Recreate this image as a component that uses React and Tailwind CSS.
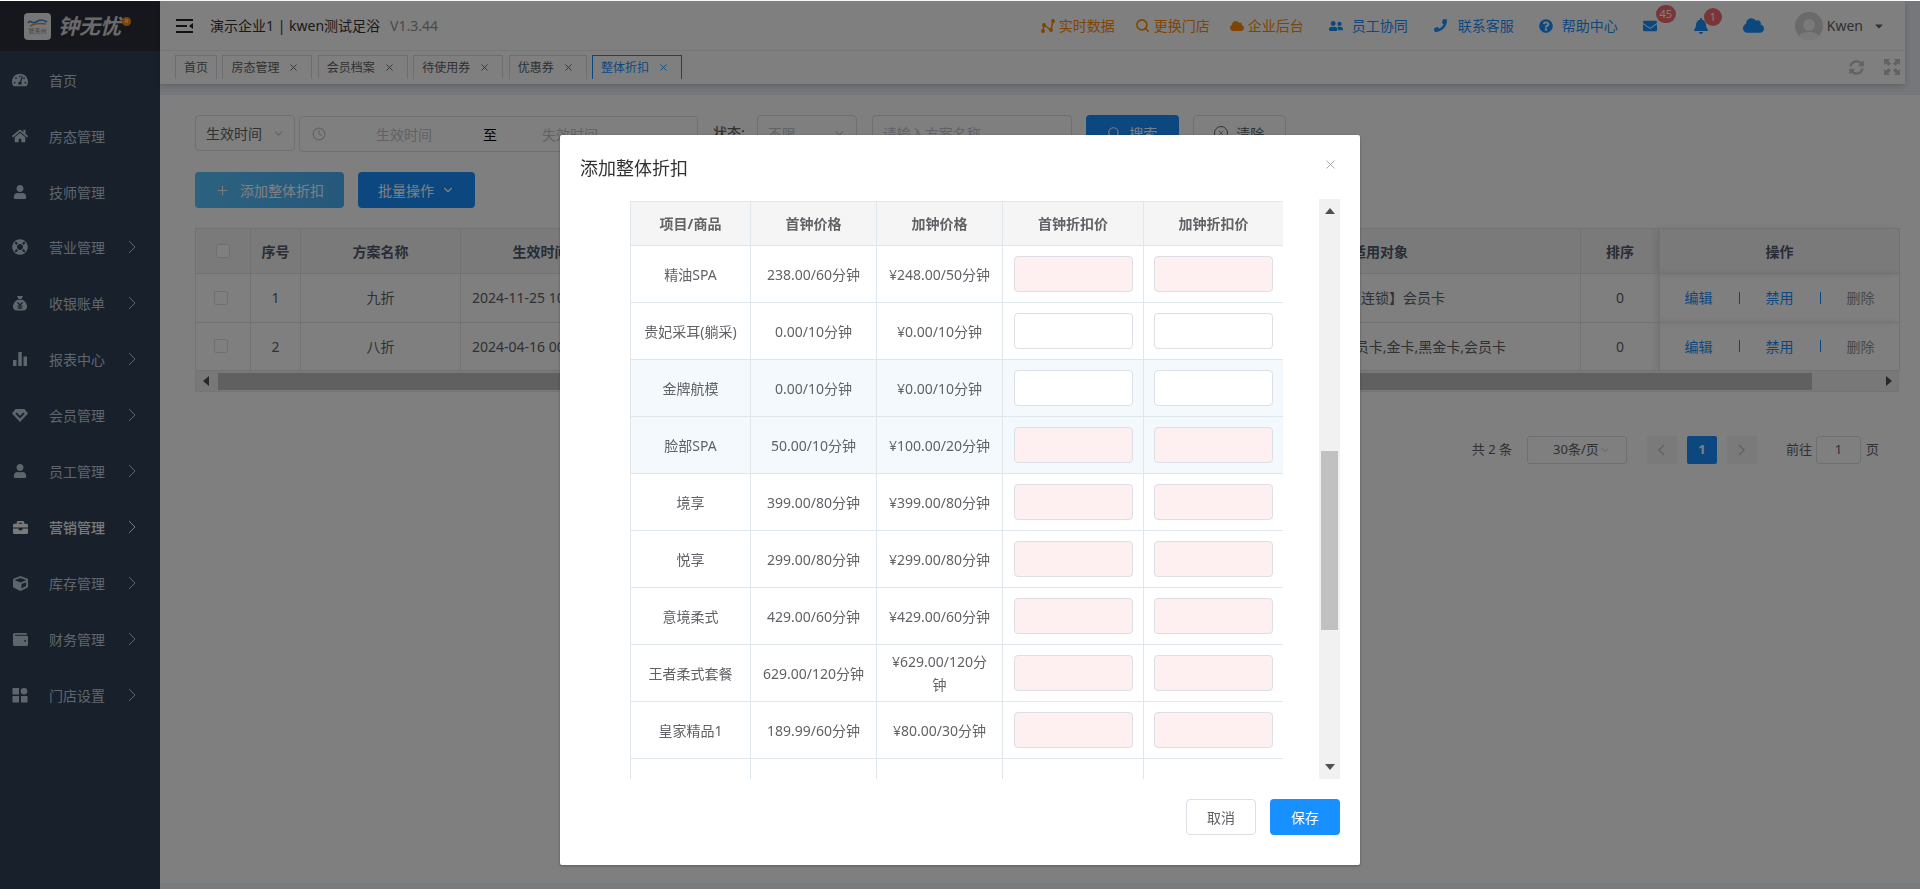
import { X, ChevronDown, Plus, Search, Clock } from "lucide-react";
import {
	FaTachometerAlt,
	FaHome,
	FaUser,
	FaLifeRing,
	FaBriefcase,
	FaCube,
	FaWallet,
	FaCloud,
	FaUserFriends,
	FaPhoneAlt,
	FaQuestionCircle,
	FaEnvelope,
	FaBell,
	FaCaretDown,
	FaSyncAlt,
} from "react-icons/fa";

const BagIcon = () => (
	<svg width="16" height="16" viewBox="0 0 16 16">
		<path fill="currentColor" d="M5 1h6l-1.5 3h-3zM5.6 4.8h4.8C13 6.4 15 8.600 15 11.500 15 14.200 13.500 15.500 11 15.500H5C2.500 15.500 1 14.200 1 11.500 1 8.600 3 6.400 5.600 4.800z" />
		<path fill="none" stroke="#304156" strokeWidth="1.200" d="M5.500 7.500 8 10l2.500-2.500M8 10v4M5.500 11h5M5.500 13h5" />
	</svg>
);

const BarsIcon = () => (
	<svg width="16" height="16" viewBox="0 0 16 16" fill="currentColor">
		<rect x="1" y="9" width="3.500" height="6" />
		<rect x="6.300" y="1" width="3.500" height="14" />
		<rect x="11.500" y="5.500" width="3.500" height="9.500" />
	</svg>
);

const GemIcon = () => (
	<svg width="16" height="16" viewBox="0 0 16 16">
		<path fill="currentColor" d="M3.500 2h9L16 6.500 8 15 0 6.500z" />
		<path fill="none" stroke="#304156" strokeWidth="1.800" d="M4 6.200l4 4 4-4" />
	</svg>
);

const GridIcon = () => (
	<svg width="16" height="16" viewBox="0 0 16 16" fill="currentColor">
		<rect x="0.500" y="1" width="6.500" height="6.500" />
		<circle cx="12" cy="4.200" r="3.300" />
		<rect x="0.500" y="9" width="6.500" height="6.500" />
		<rect x="9" y="9" width="6.500" height="6.500" />
	</svg>
);

const Chevron = () => (
	<svg width="8" height="14" viewBox="0 0 8 14" fill="none" stroke="currentColor" strokeWidth="1">
		<path d="M1 1l6 6-6 6" />
	</svg>
);

const menu = [
	{ name: "首页", icon: <FaTachometerAlt size={16} /> },
	{ name: "房态管理", icon: <FaHome size={16} /> },
	{ name: "技师管理", icon: <FaUser size={14} /> },
	{ name: "营业管理", icon: <FaLifeRing size={16} />, sub: true },
	{ name: "收银账单", icon: <BagIcon />, sub: true },
	{ name: "报表中心", icon: <BarsIcon />, sub: true },
	{ name: "会员管理", icon: <GemIcon />, sub: true },
	{ name: "员工管理", icon: <FaUser size={14} />, sub: true },
	{ name: "营销管理", icon: <FaBriefcase size={15} />, sub: true, active: true },
	{ name: "库存管理", icon: <FaCube size={15} />, sub: true },
	{ name: "财务管理", icon: <FaWallet size={15} />, sub: true },
	{ name: "门店设置", icon: <GridIcon />, sub: true },
];

const tabs = [
	{ name: "首页", fixed: true },
	{ name: "房态管理" },
	{ name: "会员档案" },
	{ name: "待使用券" },
	{ name: "优惠券" },
	{ name: "整体折扣", active: true },
];

const rows = [
	{ name: "精油SPA", first: "238.00/60分钟", extra: "¥248.00/50分钟", pink: true },
	{ name: "贵妃采耳(躺采)", first: "0.00/10分钟", extra: "¥0.00/10分钟" },
	{ name: "金牌航模", first: "0.00/10分钟", extra: "¥0.00/10分钟", hl: true },
	{ name: "脸部SPA", first: "50.00/10分钟", extra: "¥100.00/20分钟", pink: true, hl: true },
	{ name: "境享", first: "399.00/80分钟", extra: "¥399.00/80分钟", pink: true },
	{ name: "悦享", first: "299.00/80分钟", extra: "¥299.00/80分钟", pink: true },
	{ name: "意境柔式", first: "429.00/60分钟", extra: "¥429.00/60分钟", pink: true },
	{ name: "王者柔式套餐", first: "629.00/120分钟", extra: "¥629.00/120分钟", pink: true },
	{ name: "皇家精品1", first: "189.99/60分钟", extra: "¥80.00/30分钟", pink: true },
];

function Sidebar() {
	return (
		<aside className="flex w-[160px] shrink-0 flex-col bg-[#304156] text-[14px] text-[#bfcbd9]">
			<div className="flex h-[50px] items-center bg-[#2c2f3a] pl-[24px]">
				<div className="flex h-[27px] w-[27px] flex-col items-center justify-center rounded-[4px] bg-[#ececec]">
					<svg width="21" height="9" viewBox="0 0 21 9" fill="none">
						<path d="M1 5c3-5 3 2 8-1s7-2 11 0" stroke="#2f7fd0" strokeWidth="1.500" />
						<path d="M3 8c5-3 10-3 16-2" stroke="#e08a20" strokeWidth="1.500" />
					</svg>
					<span className="text-[6px] leading-[8px] text-[#777]">智善州</span>
				</div>
				<span className="ml-[7px] text-[21px] leading-none font-bold text-[#d4d4d4] italic">钟无忧</span>
				<span className="mb-[10px] ml-px flex h-[9px] w-[9px] items-center justify-center rounded-full bg-[#f08a10] text-[6px] leading-none text-white">R</span>
			</div>
			<nav className="flex flex-col pt-px">
				{menu.map((item) => (
					<div
						key={item.name}
						className={`flex h-[56px] items-center ${item.name === "营业管理" ? "-mt-px" : ""} ${item.active ? "font-medium text-[#f4f4f5]" : ""}`}
					>
						<span className="flex w-[49px] justify-center pr-[9px]">{item.icon}</span>
						<span className="w-[79px]">{item.name}</span>
						{item.sub && <Chevron />}
					</div>
				))}
			</nav>
		</aside>
	);
}

function HeaderLink({ icon, text, className }) {
	return (
		<div className={`flex items-center ${className}`}>
			{icon}
			<span>{text}</span>
		</div>
	);
}

function TopBar() {
	return (
		<div className="flex h-[94px] shrink-0 flex-col bg-[#eaeef4]">
			<div className="h-[83px] w-[1745px] bg-white shadow-[0_2px_6px_rgba(0,0,0,0.18)]">
				<div className="flex h-[50px] items-center border-b border-[#eeeeee] pl-[16px] text-[14px]">
					<svg width="18" height="14" viewBox="0 0 18 14" fill="none" stroke="#222" strokeWidth="2">
						<path d="M0 1h17M0 7h11M0 13h17" />
						<path d="M17 4v6l-4-3z" fill="#222" stroke="none" />
					</svg>
					<span className="ml-[16px] text-[#333]">演示企业1 | kwen测试足浴</span>
					<span className="ml-[10px] text-[#909399]">V1.3.44</span>
					<div className="ml-auto flex items-center">
						<HeaderLink
							className="gap-[4px] text-[#ff8a00]"
							text="实时数据"
							icon={
								<svg width="14" height="14" viewBox="0 0 14 14" fill="none" stroke="currentColor" strokeWidth="1.500">
									<path d="M2 12l1-6 7 5 2-9" />
									<circle cx="2" cy="12" r="1.200" fill="currentColor" />
									<circle cx="3" cy="6" r="1.200" fill="currentColor" />
									<circle cx="10" cy="11" r="1.200" fill="currentColor" />
									<circle cx="12" cy="2" r="1.200" fill="currentColor" />
								</svg>
							}
						/>
						<HeaderLink className="ml-[20px] gap-[4px] text-[#ff8a00]" text="更换门店" icon={<Search size={15} strokeWidth={2.5} />} />
						<HeaderLink className="ml-[20px] gap-[4px] text-[#ff8a00]" text="企业后台" icon={<FaCloud size={14} />} />
						<HeaderLink className="ml-[25px] gap-[9px] text-[#1890ff]" text="员工协同" icon={<FaUserFriends size={14} />} />
						<HeaderLink className="ml-[26px] gap-[11px] text-[#1890ff]" text="联系客服" icon={<FaPhoneAlt size={13} className="-scale-x-100" />} />
						<HeaderLink className="ml-[25px] gap-[9px] text-[#1890ff]" text="帮助中心" icon={<FaQuestionCircle size={14} />} />
						<div className="relative ml-[25px] text-[#1890ff]">
							<FaEnvelope size={14} />
							<span className="absolute top-[-14px] left-[13px] flex h-[18px] w-[20px] items-center justify-center rounded-full bg-[#f56c6c] text-[11px] leading-none text-white">45</span>
						</div>
						<div className="relative ml-[36px] text-[#1890ff]">
							<FaBell size={16} />
							<span className="absolute top-[-10px] left-[11px] flex h-[18px] w-[18px] items-center justify-center rounded-full bg-[#f56c6c] text-[11px] leading-none text-white">1</span>
						</div>
						<FaCloud size={21} className="ml-[34px] text-[#1890ff]" />
						<div className="ml-[31px] flex h-[28px] w-[28px] items-end justify-center overflow-hidden rounded-full bg-[#d4d4d4]">
							<svg width="24" height="24" viewBox="0 0 24 24" fill="#f4f4f4">
								<circle cx="12" cy="9" r="6" />
								<path d="M1 24c0-6 5-8 11-8s11 2 11 8z" />
							</svg>
						</div>
						<span className="ml-[4px] text-[#606266]">Kwen</span>
						<FaCaretDown size={12} className="mr-[20px] ml-[10px] text-[#606266]" />
					</div>
				</div>
				<div className="flex h-[33px] items-start pt-[4px] pl-[15px] text-[12px]">
					<div className="flex gap-[5.400px]">
						{tabs.map((tab) => (
							<div
								key={tab.name}
								className={`flex h-[24px] items-center border border-b-0 pl-[8px] ${tab.active ? "border-[#1890ff] text-[#1890ff]" : "border-[#d8dce5] text-[#606266]"} ${tab.fixed ? "pr-[8px]" : "gap-[9px] pr-[12px]"}`}
							>
								<span>{tab.name}</span>
								{!tab.fixed && <X size={11} />}
							</div>
						))}
					</div>
					<div className="ml-auto flex items-center gap-[20px] pt-[4px] pr-[5px] text-[#c0c4cc]">
						<FaSyncAlt size={15} />
						<svg width="16" height="16" viewBox="0 0 16 16" fill="currentColor">
							<path d="M0 0h6L4.200 1.800 7 4.600 4.600 7 1.800 4.200 0 6zM16 0v6l-1.800-1.800L11.400 7 9 4.600l2.800-2.800L10 0zM0 16v-6l1.800 1.800L4.600 9 7 11.400 4.200 14.200 6 16zM16 16h-6l1.800-1.800L9 11.400 11.400 9l2.800 2.800L16 10z" />
						</svg>
					</div>
				</div>
			</div>
		</div>
	);
}

function Filters() {
	return (
		<div className="flex h-[37px] items-start text-[14px]">
			<div className="flex h-[36px] w-[100px] items-center justify-between rounded-[4px] border border-[#dcdfe6] pr-[9px] pl-[10px] text-[#606266]">
				<span>生效时间</span>
				<ChevronDown size={13} className="text-[#c0c4cc]" />
			</div>
			<div className="mt-px ml-[4px] flex h-[36px] w-[399px] items-center rounded-[4px] border border-[#dcdfe6]">
				<Clock size={14} className="ml-[12px] text-[#c0c4cc]" />
				<span className="ml-[50px] text-[#c0c4cc]">生效时间</span>
				<span className="ml-[51px] text-black">至</span>
				<span className="ml-[45px] text-[#c0c4cc]">失效时间</span>
			</div>
			<span className="ml-[15px] pt-[7px] font-medium text-[#606266]">状态:</span>
			<div className="ml-[12px] flex h-[36px] w-[100px] items-center justify-between rounded-[4px] border border-[#dcdfe6] pr-[10px] pl-[10px] text-[#c0c4cc]">
				<span>不限</span>
				<ChevronDown size={13} />
			</div>
			<div className="ml-[15px] flex h-[36px] w-[200px] items-center rounded-[4px] border border-[#dcdfe6] pl-[10px] text-[#c0c4cc]">请输入方案名称</div>
			<div className="ml-[14px] flex h-[36px] w-[93px] items-center justify-center gap-[8px] rounded-[4px] bg-[#1890ff] text-white">
				<Search size={14} />
				<span>搜索</span>
			</div>
			<div className="ml-[14px] flex h-[36px] w-[93px] items-center justify-center gap-[8px] rounded-[4px] border border-[#dcdfe6] text-[#606266]">
				<span className="flex h-[14px] w-[14px] items-center justify-center rounded-full border border-[#606266]">
					<X size={8} />
				</span>
				<span>清除</span>
			</div>
		</div>
	);
}

function DataTable() {
	const cell = "border border-[#dfe6ec] text-center";
	const data = [
		{ no: 1, name: "九折", start: "2024-11-25 10:00:00", target: "【连锁】会员卡", pr: "pr-[135px]" },
		{ no: 2, name: "八折", start: "2024-04-16 00:00:00", target: "钻石会员卡,金卡,黑金卡,会员卡", pr: "pr-[74px]" },
	];
	return (
		<div className="w-[1704px] text-[14px] text-[#606266]">
			<table className="w-full table-fixed border-collapse">
				<colgroup>
					<col className="w-[55px]" />
					<col className="w-[50px]" />
					<col className="w-[160px]" />
					<col className="w-[360px]" />
					<col className="w-[359px]" />
					<col className="w-[401px]" />
					<col className="w-[79px]" />
					<col className="w-[240px]" />
				</colgroup>
				<thead>
					<tr className="h-[45px] bg-[#f5f5f5] font-bold text-[#515a6e]">
						<th className={cell}>
							<span className="ml-[5px] block h-[14px] w-[14px] translate-x-[15px] rounded-[2px] border border-[#dcdfe6] bg-white" />
						</th>
						<th className={cell}>序号</th>
						<th className={cell}>方案名称</th>
						<th className={`${cell} pr-[200px]`}>生效时间</th>
						<th className={cell}>失效时间</th>
						<th className={cell}>适用对象</th>
						<th className={cell}>排序</th>
						<th className={`${cell} shadow-[-4px_0_8px_rgba(0,0,0,0.1)]`}>操作</th>
					</tr>
				</thead>
				<tbody>
					{data.map((row) => (
						<tr key={row.no} className="h-[48.500px]">
							<td className={cell}>
								<span className="ml-[18px] block h-[14px] w-[14px] rounded-[2px] border border-[#dcdfe6] bg-white" />
							</td>
							<td className={cell}>{row.no}</td>
							<td className={cell}>{row.name}</td>
							<td className={`${cell} pl-[11px] !text-left whitespace-nowrap`}>{row.start}</td>
							<td className={cell}></td>
							<td className={`${cell} ${row.pr} !text-right whitespace-nowrap`}>{row.target}</td>
							<td className={cell}>0</td>
							<td className={`${cell} shadow-[-4px_0_8px_rgba(0,0,0,0.1)]`}>
								<div className="flex items-center justify-center gap-[26px]">
									<span className="text-[#1890ff]">编辑</span>
									<span className="h-[12px] w-px bg-[#1890ff]" />
									<span className="text-[#1890ff]">禁用</span>
									<span className="h-[12px] w-px bg-[#1890ff]" />
									<span className="text-[#909399]">删除</span>
								</div>
							</td>
						</tr>
					))}
				</tbody>
			</table>
			<div className="flex h-[21px] items-center justify-between border border-t-0 border-[#e8e8e8] bg-[#f1f1f1] pr-[6px] pl-[7px]">
				<svg width="6" height="10" viewBox="0 0 6 10" fill="#505050">
					<path d="M6 0v10L0 5z" />
				</svg>
				<div className="mr-[9px] ml-[9px] h-[17px] flex-1 bg-[#c1c1c1] mr-[74px]" />
				<svg width="6" height="10" viewBox="0 0 6 10" fill="#505050">
					<path d="M0 0v10l6-5z" />
				</svg>
			</div>
		</div>
	);
}

function Pagination() {
	const box = "flex h-[28px] items-center justify-center";
	return (
		<div className="mt-[44px] flex items-center justify-end pr-[41px] text-[13px] text-[#606266]">
			<span>共 2 条</span>
			<div className={`${box} ml-[15px] w-[100px] justify-between rounded-[3px] border border-[#dcdfe6] pr-[8px] pl-[18px]`}>
				<span>30条/页</span>
				<ChevronDown size={12} className="text-[#c0c4cc]" />
			</div>
			<div className={`${box} ml-[20px] w-[30px] rounded-[2px] bg-[#f4f4f5] text-[#c0c4cc]`}>
				<svg width="7" height="12" viewBox="0 0 7 12" fill="none" stroke="currentColor" strokeWidth="1.500">
					<path d="M6 1L1 6l5 5" />
				</svg>
			</div>
			<div className={`${box} ml-[10px] w-[30px] rounded-[2px] bg-[#1890ff] font-bold text-white`}>1</div>
			<div className={`${box} ml-[10px] w-[30px] rounded-[2px] bg-[#f4f4f5] text-[#c0c4cc]`}>
				<svg width="7" height="12" viewBox="0 0 7 12" fill="none" stroke="currentColor" strokeWidth="1.500">
					<path d="M1 1l5 5-5 5" />
				</svg>
			</div>
			<span className="ml-[29px]">前往</span>
			<div className={`${box} ml-[4px] w-[45px] rounded-[3px] border border-[#dcdfe6]`}>1</div>
			<span className="ml-[5px]">页</span>
		</div>
	);
}

function DiscountModal() {
	const th = "border border-[#dfe6ec] font-bold";
	const td = "border border-[#dfe6ec] px-[10px] text-center leading-[23px]";
	return (
		<div className="fixed top-px right-0 bottom-0 left-0 flex justify-center bg-black/50 pt-[134px]">
			<div className="flex h-[730px] w-[800px] flex-col rounded-[2px] bg-white shadow-[0_1px_3px_rgba(0,0,0,0.3)]">
				<div className="flex h-[64px] shrink-0 items-start justify-between pt-[20px] pr-[22px] pl-[20px]">
					<span className="text-[18px] leading-[26px] text-[#303133]">添加整体折扣</span>
					<X size={15} strokeWidth={1.200} className="mt-[2px] text-[#909399]" />
				</div>
				<div className="flex h-[580px] shrink-0 pl-[70px]">
					<div className="h-full w-[653px] overflow-hidden pt-[2px]">
						<table className="w-[653px] table-fixed border-collapse text-[14px] text-[#606266]">
							<colgroup>
								<col className="w-[120px]" />
								<col className="w-[126px]" />
								<col className="w-[126px]" />
								<col className="w-[141px]" />
								<col className="w-[140px]" />
							</colgroup>
							<thead>
								<tr className="h-[44px] bg-[#f5f5f5]">
									<th className={th}>项目/商品</th>
									<th className={th}>首钟价格</th>
									<th className={th}>加钟价格</th>
									<th className={th}>首钟折扣价</th>
									<th className={th}>加钟折扣价</th>
								</tr>
							</thead>
							<tbody>
								{rows.map((row) => (
									<tr key={row.name} className={`h-[57px] ${row.hl ? "bg-[#f4f9fd]" : ""}`}>
										<td className={`${td} !px-0`}>{row.name}</td>
										<td className={`${td} !px-0`}>{row.first}</td>
										<td className={td}>{row.extra}</td>
										{[0, 1].map((i) => (
											<td key={i} className="border border-[#dfe6ec] text-center">
												<input
													type="text"
													className={`h-[36px] w-[119px] rounded-[4px] border border-[#dcdfe6] align-middle outline-none ${row.pink ? "bg-[#fef0f0]" : "bg-white"}`}
												/>
											</td>
										))}
									</tr>
								))}
								<tr className="h-[57px]">
									<td className={td}></td>
									<td className={td}></td>
									<td className={td}></td>
									<td className={td}></td>
									<td className={td}></td>
								</tr>
							</tbody>
						</table>
					</div>
					<div className="ml-[36px] flex h-full w-[21px] flex-col items-center bg-[#f1f1f1] pt-[9px] pb-[9px]">
						<svg width="10" height="6" viewBox="0 0 10 6" fill="#505050">
							<path d="M0 6h10L5 0z" />
						</svg>
						<div className="mt-[237px] h-[179px] w-[17px] bg-[#c1c1c1]" />
						<svg width="10" height="6" viewBox="0 0 10 6" fill="#505050" className="mt-auto">
							<path d="M0 0h10L5 6z" />
						</svg>
					</div>
				</div>
				<div className="flex justify-end gap-[14px] pt-[20px] pr-[20px] text-[14px]">
					<div className="flex h-[36px] w-[70px] items-center justify-center rounded-[4px] border border-[#dcdfe6] text-[#606266]">取消</div>
					<div className="flex h-[36px] w-[70px] items-center justify-center rounded-[4px] bg-[#1890ff] text-white">保存</div>
				</div>
			</div>
		</div>
	);
}

export default function App() {
	return (
		<div className="relative flex h-[889px] w-[1920px] overflow-hidden bg-white pt-px [font-family:'Noto_Sans','Noto_Sans_CJK_SC',sans-serif]">
			<Sidebar />
			<main className="flex min-w-0 flex-1 flex-col">
				<TopBar />
				<div className="flex-1 bg-white pt-[20px] pl-[35px]">
					<Filters />
					<div className="mt-[20px] flex gap-[14px] text-[14px] text-white">
						<div className="flex h-[36px] w-[149px] items-center justify-center gap-[10px] rounded-[4px] bg-gradient-to-r from-[#58c4ff] to-[#4cb0f8]">
							<Plus size={15} strokeWidth={1.500} />
							<span>添加整体折扣</span>
						</div>
						<div className="flex h-[36px] w-[117px] items-center justify-center gap-[7px] rounded-[4px] bg-[#1890ff]">
							<span>批量操作</span>
							<ChevronDown size={14} />
						</div>
					</div>
					<div className="mt-[20px]">
						<DataTable />
						<Pagination />
					</div>
				</div>
				<div className="h-[6px] shrink-0 bg-[#f4f6f8]" />
			</main>
			<DiscountModal />
		</div>
	);
}
